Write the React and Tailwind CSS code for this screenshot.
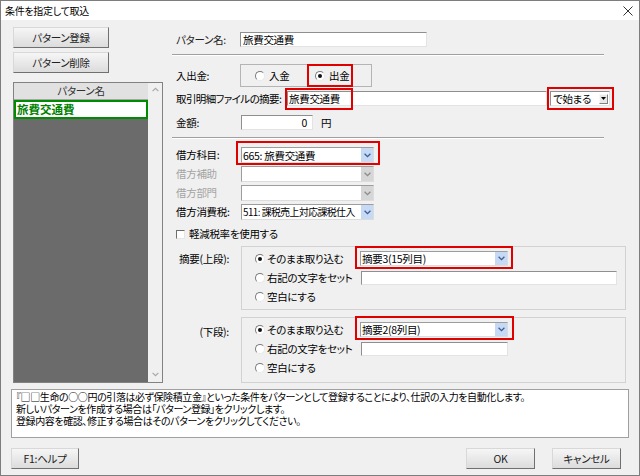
import React from "react";

const Chev = ({ color = "#3b5b8a" }) => (
  <svg width="7" height="5" viewBox="0 0 7 5">
    <path d="M0.6 0.8 L3.5 3.7 L6.4 0.8" fill="none" stroke={color} strokeWidth="1.3" />
  </svg>
);

function Select({ className, text, disabled, textClass = "" }) {
  return (
    <div className={`flex bg-white border border-[#9d9d9d] border-b-[#dcdcdc] border-r-[#dcdcdc] ${className}`}>
      <div className={`flex-1 flex items-center pl-[1px] whitespace-nowrap overflow-hidden leading-[13px] ${textClass}`}>{text}</div>
      <div className={`w-[12px] flex items-center justify-center ${disabled ? "bg-[#d6d6d6]" : "bg-[#c6daf6]"}`}>
        <Chev color={disabled ? "#8c8c8c" : "#3d5d8e"} />
      </div>
    </div>
  );
}

function Input({ className, children }) {
  return (
    <div className={`flex items-center bg-white border border-[#8f8f8f] border-b-[#e3e3e3] border-r-[#e3e3e3] whitespace-nowrap leading-[13px] ${className}`}>
      {children}
    </div>
  );
}

function Radio({ checked }) {
  return (
    <span className="w-[10px] h-[10px] shrink-0 rounded-full border border-t-[#7a7a7a] border-l-[#7a7a7a] border-r-[#e8e8e8] border-b-[#e8e8e8] bg-white flex items-center justify-center">
      {checked && <span className="w-[4px] h-[4px] rounded-full bg-[#111]" />}
    </span>
  );
}

function Btn({ className, children }) {
  return (
    <div className={`h-[21px] flex items-center justify-center bg-gradient-to-b from-[#f6f6f6] to-[#dcdcdc] border border-t-[#d8d8d8] border-l-[#d8d8d8] border-b-[#707070] border-r-[#707070] text-[#222] ${className}`}>
      {children}
    </div>
  );
}

const Red = ({ className }) => (
  <div className={`absolute border-2 border-[#e00000] pointer-events-none ${className}`} />
);

export default function App() {
  return (
    <div className="w-[640px] h-[476px] bg-[#f0f0f0] border border-[#7d7d7d] flex flex-col overflow-hidden text-[10.5px] tracking-[-0.3px] text-black font-['Noto_Sans_CJK_JP',sans-serif] [font-feature-settings:'palt']">
      {/* title bar */}
      <div className="h-[19px] shrink-0 bg-white flex items-center justify-between pl-[4px] pr-[6px]">
        <span className="text-[10px] leading-[12px]">条件を指定して取込</span>
        <svg width="10" height="10" viewBox="0 0 10 10">
          <path d="M0.5 0.5 L9.5 9.5 M9.5 0.5 L0.5 9.5" stroke="#333" strokeWidth="1" />
        </svg>
      </div>

      {/* body */}
      <div className="flex h-[363px] shrink-0">
        {/* left column */}
        <div className="ml-[12px] w-[150px] flex flex-col pt-[7px]">
          <Btn className="w-[96px] h-[20px]">パターン登録</Btn>
          <Btn className="w-[96px] h-[20px] mt-[4px]">パターン削除</Btn>
          <div className="mt-[9px] h-[302px] flex border border-[#828282]">
            <div className="flex-1 flex flex-col bg-[#6b6b6b]">
              <div className="h-[17px] bg-[#e1e1e1] border-b border-[#a6a6a6] flex items-center justify-center text-[#333] leading-[13px]">パターン名</div>
              <div className="h-[19px] bg-white border-2 border-[#008c00] flex items-center pl-[1px] text-[#007f00] font-bold text-[11.5px] tracking-[0px] leading-[14px]">旅費交通費</div>
            </div>
            <div className="w-[14px] bg-[#f0f0f0] flex flex-col justify-between items-center pt-[4px] pb-[5px]">
              <svg width="7" height="5" viewBox="0 0 7 5"><path d="M0.6 4.2 L3.5 1.3 L6.4 4.2" fill="none" stroke="#a8a8a8" strokeWidth="1.2" /></svg>
              <svg width="7" height="5" viewBox="0 0 7 5"><path d="M0.6 0.8 L3.5 3.7 L6.4 0.8" fill="none" stroke="#a8a8a8" strokeWidth="1.2" /></svg>
            </div>
          </div>
        </div>

        {/* right column */}
        <div className="ml-[9px] w-[456px] flex flex-col">
          <div className="mt-[12px] h-[15px] flex items-center">
            <div className="w-[68px] pl-[4px] text-[#222]">パターン名:</div>
            <Input className="w-[187px] h-[15px] pl-[2px]">旅費交通費</Input>
          </div>
          <div className="mt-[7px] w-[432px] h-[2px] border-t border-t-[#a0a0a0] border-b border-b-white" />

          <div className="mt-[8px] h-[23px] flex items-center">
            <div className="w-[68px] pl-[4px]">入出金:</div>
            <div className="relative w-[132px] h-[23px] border border-[#b4b4b4] flex items-center pl-[14px]">
              <div className="w-[60px] flex items-center gap-[4px]"><Radio />入金</div>
              <div className="flex items-center gap-[4px]"><Radio checked />出金</div>
              <Red className="left-[66px] top-[-1px] w-[46px] h-[23px]" />
            </div>
          </div>

          <div className="mt-[4px] h-[15px] flex items-center">
            <div className="w-[115px] pl-[4px] whitespace-nowrap tracking-[-0.6px]">取引明細ファイルの摘要:</div>
            <div className="relative">
              <Input className="w-[260px] h-[15px] pl-[1px]">旅費交通費</Input>
              <Red className="left-[-2px] top-[-3px] w-[68px] h-[22px]" />
            </div>
            <div className="relative ml-[3px]">
              <div className="w-[60px] h-[15px] flex items-center bg-white border border-[#8f8f8f] border-b-[#e3e3e3] border-r-[#e3e3e3]">
                <div className="flex-1 pl-[2px] leading-[13px]">で始まる</div>
                <div className="w-[9px] h-[10px] mr-[1px] bg-[#e8e8e8] border border-t-[#f8f8f8] border-l-[#f8f8f8] border-b-[#808080] border-r-[#808080] flex items-center justify-center">
                  <svg width="5" height="3" viewBox="0 0 5 3"><path d="M0 0 L5 0 L2.5 3 Z" fill="#000" /></svg>
                </div>
              </div>
              <Red className="left-[-3px] top-[-4px] w-[67px] h-[23px]" />
            </div>
          </div>

          <div className="mt-[9px] h-[15px] flex items-center">
            <div className="w-[69px] pl-[4px]">金額:</div>
            <Input className="w-[72px] h-[15px] justify-end pr-[5px]">0</Input>
            <div className="ml-[8px]">円</div>
          </div>
          <div className="mt-[7px] w-[432px] h-[2px] border-t border-t-[#a0a0a0] border-b border-b-white" />

          <div className="mt-[8px] h-[16px] flex items-center">
            <div className="w-[69px] pl-[4px]">借方科目:</div>
            <div className="relative">
              <Select className="w-[133px] h-[16px]" text="665: 旅費交通費" />
              <Red className="left-[-5px] top-[-6px] w-[144px] h-[24px]" />
            </div>
          </div>
          <div className="mt-[3px] h-[16px] flex items-center">
            <div className="w-[69px] pl-[4px] text-[#a3a3a3]">借方補助</div>
            <Select className="w-[133px] h-[16px]" text="" disabled />
          </div>
          <div className="mt-[3px] h-[16px] flex items-center">
            <div className="w-[69px] pl-[4px] text-[#a3a3a3]">借方部門</div>
            <Select className="w-[133px] h-[16px]" text="" disabled />
          </div>
          <div className="mt-[3px] h-[16px] flex items-center">
            <div className="w-[69px] pl-[4px]">借方消費税:</div>
            <Select className="w-[133px] h-[16px]" textClass="text-[9.8px] tracking-[-0.5px]" text="511: 課税売上対応課税仕入" />
          </div>

          <div className="mt-[8px] h-[12px] flex items-center pl-[4px] gap-[4px]">
            <span className="w-[9px] h-[9px] bg-white border border-t-[#6e6e6e] border-l-[#6e6e6e] border-b-[#e6e6e6] border-r-[#e6e6e6]" />
            <span>軽減税率を使用する</span>
          </div>

          <div className="mt-[6px] flex">
            <div className="w-[69px] pr-[12px] pt-[5px] text-right whitespace-nowrap">摘要(上段):</div>
            <div className="w-[385px] h-[64px] border border-[#d2d2d2] flex flex-col pt-[2px]">
              <div className="h-[19px] flex items-center pl-[13px]">
                <div className="w-[105px] flex items-center gap-[2px]"><Radio checked />そのまま取り込む</div>
                <div className="relative">
                  <Select className="w-[148px] h-[15px]" text="摘要3(15列目)" />
                  <Red className="left-[-5px] top-[-5px] w-[158px] h-[23px]" />
                </div>
              </div>
              <div className="h-[19px] flex items-center pl-[13px]">
                <div className="w-[106px] flex items-center gap-[2px]"><Radio />右記の文字をセット</div>
                <Input className="w-[256px] h-[14px]" />
              </div>
              <div className="h-[19px] flex items-center pl-[13px] gap-[2px]"><Radio />空白にする</div>
            </div>
          </div>

          <div className="mt-[7px] flex">
            <div className="w-[69px] pr-[12px] pt-[7px] text-right whitespace-nowrap">(下段):</div>
            <div className="w-[385px] h-[66px] border border-[#d2d2d2] flex flex-col pt-[2px]">
              <div className="h-[19px] flex items-center pl-[13px]">
                <div className="w-[105px] flex items-center gap-[2px]"><Radio checked />そのまま取り込む</div>
                <div className="relative">
                  <Select className="w-[148px] h-[15px]" text="摘要2(8列目)" />
                  <Red className="left-[-5px] top-[-6px] w-[159px] h-[24px]" />
                </div>
              </div>
              <div className="h-[19px] flex items-center pl-[13px]">
                <div className="w-[106px] flex items-center gap-[2px]"><Radio />右記の文字をセット</div>
                <Input className="w-[147px] h-[14px]" />
              </div>
              <div className="h-[19px] flex items-center pl-[13px] gap-[2px]"><Radio />空白にする</div>
            </div>
          </div>
        </div>
      </div>

      {/* description */}
      <div className="ml-[10px] mt-[6px] w-[618px] h-[49px] shrink-0 bg-white border border-[#a0a0a0] pl-[4px] pt-[1px] leading-[12px] text-[10px] tracking-[-0.4px] whitespace-nowrap">
        <div>『□□生命の○○円の引落は必ず保険積立金』といった条件をパターンとして登録することにより、仕訳の入力を自動化します。</div>
        <div>新しいパターンを作成する場合は「パターン登録」をクリックします。</div>
        <div>登録内容を確認、修正する場合はそのパターンをクリックしてください。</div>
      </div>

      {/* footer */}
      <div className="mt-[10px] h-[21px] shrink-0 flex">
        <Btn className="ml-[10px] w-[68px]">F1:ヘルプ</Btn>
        <div className="flex-1" />
        <Btn className="w-[69px]">OK</Btn>
        <Btn className="ml-[17px] mr-[18px] w-[69px]">キャンセル</Btn>
      </div>
    </div>
  );
}
